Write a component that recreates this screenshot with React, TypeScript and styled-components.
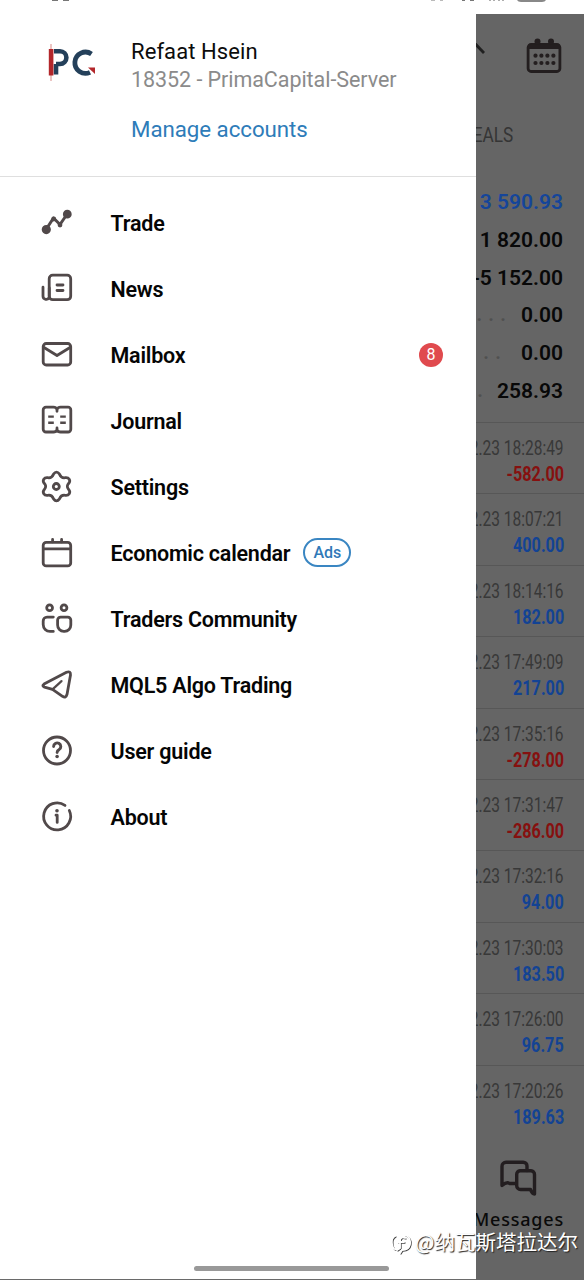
import React from "react";
import styled, { createGlobalStyle } from "styled-components";

const GlobalStyle = createGlobalStyle`
  * { box-sizing: border-box; }
  body {
    margin: 0;
    background: #fff;
    font-family: Roboto, "Noto Sans CJK SC", sans-serif;
    color: #050505;
  }
`;

const Screen = styled.div`
  position: relative;
  width: 584px;
  height: 1280px;
  display: flex;
  flex-direction: column;
  overflow: hidden;
  background: #fff;
`;

const StatusBar = styled.div`
  height: 14px;
  flex: none;
  display: flex;
  justify-content: space-between;
  overflow: hidden;
`;

const Body = styled.div`
  flex: 1;
  display: flex;
  min-height: 0;
`;

const Drawer = styled.aside`
  width: 476px;
  flex: none;
  display: flex;
  flex-direction: column;
  background: #fff;
  border-bottom: 1px solid #6a6a6a;
`;

const Account = styled.header`
  height: 163px;
  flex: none;
  display: flex;
  border-bottom: 1px solid #dfdfdf;
`;

const LogoCell = styled.div`
  width: 131px;
  padding: 28px 0 0 46px;
`;

const AccountText = styled.div`
  display: flex;
  flex-direction: column;
  align-items: flex-start;
  padding-top: 24px;
`;

const Line = styled.div<{ $color: string; $size: number; $gap?: number; $spacing?: number }>`
  height: 28px;
  line-height: 28px;
  margin-top: ${(p) => p.$gap ?? 0}px;
  font-size: ${(p) => p.$size}px;
  letter-spacing: ${(p) => p.$spacing ?? 0}px;
  color: ${(p) => p.$color};
  white-space: nowrap;
`;

const Menu = styled.nav`
  display: flex;
  flex-direction: column;
  padding-top: 13px;
`;

const MenuItem = styled.div`
  height: 66px;
  display: flex;
  align-items: center;
  padding: 0 33px 0 40px;
`;

const MenuIcon = styled.svg`
  width: 34px;
  height: 34px;
  flex: none;
  margin-top: -3px;
  overflow: visible;
  fill: none;
  stroke: #51494a;
  stroke-width: 2.8;
  stroke-linecap: round;
  stroke-linejoin: round;
`;

const MenuLabel = styled.span`
  margin-left: 36.5px;
  font-size: 21.5px;
  letter-spacing: -0.22px;
  font-weight: 600;
  white-space: nowrap;
`;

const AdsPill = styled.span`
  width: 48px;
  height: 29px;
  margin: -2px 0 0 13px;
  border: 2px solid #3a86c2;
  border-radius: 15px;
  color: #3079b8;
  font-size: 16px;
  font-weight: 500;
  line-height: 26px;
  text-align: center;
`;

const Count = styled.span`
  width: 24px;
  height: 24px;
  margin-left: auto;
  border-radius: 50%;
  background: #e04a4e;
  color: #fff;
  font-size: 16px;
  line-height: 24px;
  text-align: center;
`;

const HomeIndicator = styled.div`
  width: 195px;
  height: 5px;
  margin: auto 0 8px 194px;
  border-radius: 3px;
  background: #999;
`;

const Backdrop = styled.main`
  flex: 1;
  min-width: 0;
  display: flex;
  flex-direction: column;
  overflow: hidden;
  background: #656565;
`;

const Toolbar = styled.div`
  height: 85px;
  flex: none;
  display: flex;
  justify-content: space-between;
  padding: 24px 22px 0 0;
`;

const TabLabel = styled.div`
  height: 84px;
  flex: none;
  display: flex;
  padding: 22px 71px 0 0;
  justify-content: flex-end;
  line-height: 28px;
  color: #353535;
`;

const Narrow = styled.span<{ $scale: number; $size: number }>`
  flex: none;
  display: inline-block;
  white-space: nowrap;
  font-size: ${(p) => p.$size}px;
  transform: scaleX(${(p) => p.$scale});
  transform-origin: right center;
`;

const SummaryRow = styled.div<{ $accent?: boolean }>`
  height: 37.85px;
  flex: none;
  display: flex;
  align-items: center;
  justify-content: flex-end;
  padding-right: 21px;
  font-size: 21px;
  font-weight: 600;
  white-space: nowrap;
  color: ${(p) => (p.$accent ? "#15459a" : "#080808")};
`;

const Dots = styled.span<{ $gap: number }>`
  margin-right: ${(p) => p.$gap}px;
  color: #505050;
  font-size: 20px;
  font-weight: 600;
  line-height: 20px;
  letter-spacing: 6.2px;
  padding-bottom: 3px;
`;

const Summary = styled.section`
  height: 240px;
  flex: none;
  border-bottom: 1px solid #575757;
`;

const Deal = styled.div`
  height: 71.4px;
  flex: none;
  display: flex;
  flex-direction: column;
  align-items: flex-end;
  padding: 12px 20px 0 0;
  border-bottom: 1px solid #575757;
`;

const Deals = styled.section`
  flex: none;
  & > :last-child { border-bottom-color: transparent; }
`;

const DealTime = styled.div`
  height: 26px;
  line-height: 26px;
  color: #383838;
`;

const DealValue = styled.div<{ $loss: boolean }>`
  height: 26px;
  line-height: 26px;
  font-weight: 700;
  color: ${(p) => (p.$loss ? "#86100f" : "#134394")};
`;

const MessagesTab = styled.div`
  flex: none;
  display: flex;
  flex-direction: column;
  align-items: flex-end;
  padding: 23px 20px 0 0;
`;

const MessagesGlyph = styled.svg`
  width: 38px;
  height: 36px;
  margin-right: 27px;
  fill: none;
  stroke: #231e20;
  stroke-width: 3.4;
  stroke-linecap: round;
  stroke-linejoin: round;
`;

const MessagesLabel = styled.span`
  margin-top: 10px;
  font-size: 18px;
  font-weight: 500;
  line-height: 26px;
  letter-spacing: 0.8px;
  color: #0a0a0a;
  white-space: nowrap;
  font-family: "Noto Sans", sans-serif;
`;

const Watermark = styled.div`
  position: absolute;
  right: 6px;
  top: 1225px;
  display: flex;
  align-items: center;
  gap: 2px;
  height: 32px;
  font-family: "Noto Sans CJK SC", sans-serif;
  font-size: 20.5px;
  line-height: 32px;
  white-space: nowrap;
  color: #fff;
  text-shadow: 1px 1px 1px #222;
`;

const WatermarkGlyph = styled.svg`
  width: 22px;
  height: 24px;
  margin-top: 6px;
  fill: none;
  stroke-linecap: round;
`;

const icons = {
  trade: (
    <>
      <path d="M6 24.5 13.5 13 20 19.5 27.5 8.5" strokeWidth="3" />
      <circle cx="6.3" cy="24.6" r="3.2" fill="#51494a" />
      <circle cx="13.7" cy="14" r="2.4" fill="#51494a" stroke="none" />
      <circle cx="20" cy="20" r="2.4" fill="#51494a" stroke="none" />
      <circle cx="27.3" cy="9.2" r="3" fill="#51494a" />
    </>
  ),
  news: (
    <>
      <rect x="9.2" y="4.2" width="21.5" height="24.5" rx="3.5" />
      <path d="M3 16.2V25.2a3.3 3.3 0 0 0 6.3 1.2V17M17 14h6M17 19.5h6" />
    </>
  ),
  mail: (
    <>
      <rect x="3.2" y="6.5" width="27.5" height="21.5" rx="3" />
      <path d="M4 10.5 17 18.5 30 10.5" />
    </>
  ),
  journal: (
    <>
      <path d="M6 4.2h7.5Q16 4.2 17 6.5q1-2.3 3.5-2.3H28a2.8 2.8 0 0 1 2.8 2.8v19.2A2.8 2.8 0 0 1 28 29h-7.5q-2.5 0-3.5-2-1 2-3.5 2H6a2.8 2.8 0 0 1-2.8-2.8V7A2.8 2.8 0 0 1 6 4.2ZM17 6.5V8.3M17 25v2" />
      <path d="M8.2 13.6h5.6M8.2 19.8h5.6M20.2 13.6h5.6M20.2 19.8h5.6" strokeWidth="2.4" strokeLinecap="butt" />
    </>
  ),
  settings: (
    <>
      <path d="M13.5 5.2Q16.5 1.2 19.5 5.2C20.7 8.2 22.3 9.2 25.2 8.7 29 8.2 31 11.5 28.8 14.3 26.7 16.5 26.7 18.5 28.8 20.7 31 23.5 29 26.8 25.2 26.3 22.3 25.8 20.7 26.8 19.5 29.8Q16.5 33.8 13.5 29.8C12.3 26.8 10.7 25.8 7.8 26.3 4 26.8 2 23.5 4.2 20.7 6.3 18.5 6.3 16.5 4.2 14.3 2 11.5 4 8.2 7.8 8.7 10.7 9.2 12.3 8.2 13.5 5.2Z" />
      <circle cx="16.3" cy="17.5" r="3" />
    </>
  ),
  calendar: (
    <>
      <rect x="3.2" y="7.4" width="27.5" height="23.5" rx="3" />
      <path d="M3.5 13.9h27M12.6 4.4v2.5M21.6 4.4v2.5" />
    </>
  ),
  community: (
    <>
      <circle cx="9.6" cy="6.8" r="2.9" />
      <circle cx="24" cy="6.8" r="2.9" />
      <path d="M13.3 16.1H7a3.8 3.8 0 0 0-3.8 3.8V23.6A6.8 6.8 0 0 0 10 30.4h3.3M20.5 16.1h7.3a3 3 0 0 1 3 3v5a6.2 6.2 0 0 1-6.2 6.3h-.8a6.2 6.2 0 0 1-6.2-6.3v-5a3 3 0 0 1 3-3Z" />
    </>
  ),
  algo: (
    <>
      <path d="M4 17.1 26.5 5.3Q30.8 3.6 30.5 8.1L27 27.4Q26 31.4 22.5 29.3L12.5 22.4 4.5 20.1Q1.5 18.8 4 17.1Z" />
      <path d="M12.5 22.4 21.5 14.1" strokeWidth="2.2" />
    </>
  ),
  guide: (
    <>
      <circle cx="17" cy="17.5" r="13.5" />
      <path d="M13.6 13.6a3.6 3.6 0 1 1 5.5 3Q17.1 17.6 17.1 19.5" strokeWidth="2.9" />
      <circle cx="17.1" cy="23.5" r="1.8" fill="#51494a" stroke="none" />
    </>
  ),
  about: (
    <>
      <path d="M25 6.4A13.5 13.5 0 1 0 29.3 11.5" />
      <path d="M16 16.2h1.2v7.2" />
      <circle cx="17" cy="11.7" r="1.8" fill="#51494a" stroke="none" />
    </>
  ),
};

const menu: { icon: keyof typeof icons; label: string; ads?: boolean; count?: number }[] = [
  { icon: "trade", label: "Trade" },
  { icon: "news", label: "News" },
  { icon: "mail", label: "Mailbox", count: 8 },
  { icon: "journal", label: "Journal" },
  { icon: "settings", label: "Settings" },
  { icon: "calendar", label: "Economic calendar", ads: true },
  { icon: "community", label: "Traders Community" },
  { icon: "algo", label: "MQL5 Algo Trading" },
  { icon: "guide", label: "User guide" },
  { icon: "about", label: "About" },
];

const summary = [
  { value: "3 590.93", accent: true },
  { value: "1 820.00" },
  { value: "-5 152.00" },
  { value: "0.00", dots: "...", gap: 9 },
  { value: "0.00", dots: "..", gap: 14 },
  { value: "258.93", dots: ".", gap: 8 },
];

const deals: [string, string][] = [
  ["18:28:49", "-582.00"],
  ["18:07:21", "400.00"],
  ["18:14:16", "182.00"],
  ["17:49:09", "217.00"],
  ["17:35:16", "-278.00"],
  ["17:31:47", "-286.00"],
  ["17:32:16", "94.00"],
  ["17:30:03", "183.50"],
  ["17:26:00", "96.75"],
  ["17:20:26", "189.63"],
];

const BrokerLogo = () => (
  <svg width="50" height="40" viewBox="0 0 50 40" fill="none">
    <path d="M8 9.2h6a6.2 6.2 0 0 1 0 12.8H10M10 22v10.5" stroke="#24405a" strokeWidth="4.6" />
    <path d="M45.5 12A10.6 10.6 0 1 0 44 30.3" stroke="#24405a" strokeWidth="4.8" />
    <path d="M5 2v37" stroke="#d98a86" strokeWidth="1" />
    <path d="M2.8 7h4.6v26.5H2.8z" fill="#b3272b" />
    <path d="M42 25.5h7v6.5z" fill="#b3272b" />
  </svg>
);

const StatusMarks = () => (
  <svg width="584" height="14" viewBox="0 0 584 14" fill="none" stroke="#777" strokeWidth="1.2">
    <path d="M52 .3h6M63 .3h6M431 0h4M440 0h3M462 .4h3M470 .4h4M490 0v1M494 0v1M499 0v1M503 0v1" />
    <path d="M517 0h29q-1 2-4 2h-21q-3 0-4-2Z" fill="#888" stroke="none" />
  </svg>
);

const CalendarGrid = () => (
  <svg width="36" height="36" viewBox="0 0 36 36">
    <rect x="2.1" y="6.5" width="31.8" height="27" rx="3" fill="none" stroke="#231e1f" strokeWidth="2.8" />
    <path d="M2 6.5h32v4.5H2z" fill="#231e1f" />
    <g fill="#231e1f">
      <circle cx="11.5" cy="3.5" r="3" />
      <circle cx="25" cy="3.5" r="3" />
      {[17.7, 25].map((y) => [9.5, 15.4, 21.4, 27.4].map((x) => <circle key={`${x}-${y}`} cx={x} cy={y} r="2.1" />))}
    </g>
  </svg>
);

const MessagesIcon = () => (
  <MessagesGlyph viewBox="0 0 38 36">
    <path d="M28 10.5V6a3.8 3.8 0 0 0-3.8-3.8H7A4 4 0 0 0 3 6.2V25.5Q8 21.5 10.5 23.5H17" />
    <path d="M21 10.7H32A3.7 3.7 0 0 1 35.5 14.5V34Q33 34 31.5 29.5H21.5A3.8 3.8 0 0 1 17.7 25.7V14.5A3.7 3.7 0 0 1 21 10.7Z" />
  </MessagesGlyph>
);

const WatermarkLogo = () => (
  <WatermarkGlyph viewBox="0 0 22 24">
    <path d="M5 5Q1 7 2 13T6 18M15 4Q21 6 20 13Q19 19 12 19L10 22M8 11h6M15 7q-5-2-5 3v7l-3 2" stroke="#444" strokeWidth="1.3" />
    <path d="M4 4Q0 6 1 12T5 17M14 3Q20 5 19 12Q18 18 11 18L9 21M7 10h6M14 6q-5-2-5 3v7l-3 2" stroke="#fff" strokeWidth="1.8" />
  </WatermarkGlyph>
);

export default function App() {
  return (
    <Screen>
      <GlobalStyle />
      <StatusBar><StatusMarks /></StatusBar>
      <Body>
        <Drawer>
          <Account>
            <LogoCell><BrokerLogo /></LogoCell>
            <AccountText>
              <Line $color="#0c0c0c" $size={22} $spacing={0.08}>Refaat Hsein</Line>
              <Line $color="#8b8b8b" $size={21.5} $spacing={-0.06}>18352 - PrimaCapital-Server</Line>
              <Line $color="#2e7cb9" $size={22.3} $gap={21} $spacing={-0.05}>Manage accounts</Line>
            </AccountText>
          </Account>
          <Menu>
            {menu.map((item) => (
              <MenuItem key={item.label}>
                <MenuIcon viewBox="0 0 34 34">{icons[item.icon]}</MenuIcon>
                <MenuLabel>{item.label}</MenuLabel>
                {item.ads && <AdsPill>Ads</AdsPill>}
                {item.count && <Count>{item.count}</Count>}
              </MenuItem>
            ))}
          </Menu>
          <HomeIndicator />
        </Drawer>
        <Backdrop>
          <Toolbar>
            <svg width="10" height="34" viewBox="0 0 10 34"><path d="M-2 4.5 8 15" stroke="#202020" strokeWidth="2.8" /></svg>
            <CalendarGrid />
          </Toolbar>
          <TabLabel><Narrow $size={21} $scale={0.82}>DEALS</Narrow></TabLabel>
          <Summary>
            {summary.map((row, i) => (
              <SummaryRow key={i} $accent={row.accent}>
                {row.dots && <Dots $gap={row.gap}>{row.dots}</Dots>}
                {row.value}
              </SummaryRow>
            ))}
          </Summary>
          <Deals>
            {deals.map(([time, value]) => (
              <Deal key={time}>
                <DealTime><Narrow $size={20} $scale={0.775}>2022.12.23 {time}</Narrow></DealTime>
                <DealValue $loss={value.startsWith("-")}><Narrow $size={20} $scale={0.81}>{value}</Narrow></DealValue>
              </Deal>
            ))}
          </Deals>
          <MessagesTab>
            <MessagesIcon />
            <MessagesLabel>Messages</MessagesLabel>
          </MessagesTab>
        </Backdrop>
      </Body>
      <Watermark><WatermarkLogo />@纳瓦斯塔拉达尔</Watermark>
    </Screen>
  );
}
